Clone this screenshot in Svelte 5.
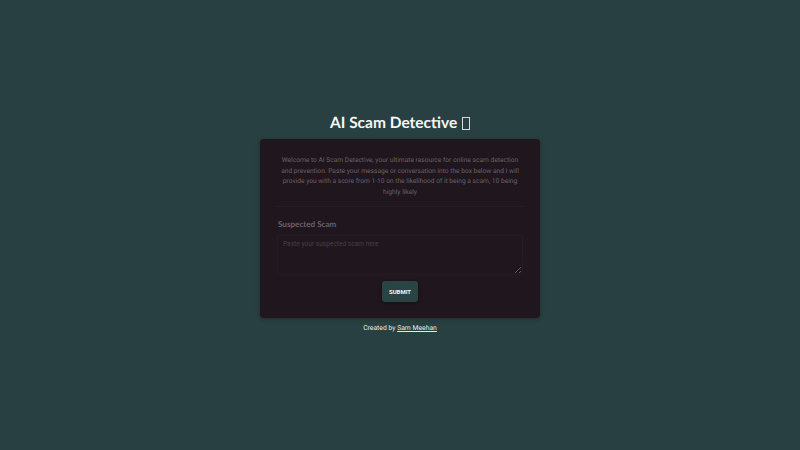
<script lang="ts">
  let scam = $state('');
</script>

<main class="page">
  <h1 class="title">AI Scam Detective <span class="tofu" aria-hidden="true"></span></h1>

  <section class="card">
    <p class="intro">
      Welcome to AI Scam Detective, your ultimate resource for online scam detection and prevention.
      Paste your message or conversation into the box below and I will provide you with a score from
      1-10 on the likelihood of it being a scam, 10 being highly likely
    </p>
    <hr class="rule" />

    <form class="form" onsubmit={(e) => e.preventDefault()}>
      <label class="label" for="scam">Suspected Scam</label>
      <textarea id="scam" class="input" placeholder="Paste your suspected scam here" bind:value={scam}></textarea>
      <button type="submit" class="submit">SUBMIT</button>
    </form>
  </section>

  <p class="credit">Created by <a href="#top">Sam Meehan</a></p>
</main>

<style>
  :global(body) {
    margin: 0;
    background: #284041;
  }

  .page {
    box-sizing: border-box;
    height: 450px;
    padding-bottom: 5px;
    display: flex;
    flex-direction: column;
    align-items: center;
    justify-content: center;
    font-family: Roboto, sans-serif;
    text-rendering: geometricPrecision;
  }

  .title {
    margin: 0 0 5px;
    font-family: Lato, sans-serif;
    font-size: 15.5px;
    line-height: 22px;
    font-weight: 700;
    color: #f4f7f6;
  }

  .tofu {
    display: inline-block;
    box-sizing: border-box;
    width: 8px;
    height: 13px;
    margin-left: 1px;
    vertical-align: -2px;
    border: 1px solid #d5dcdb;
  }

  .card {
    box-sizing: border-box;
    width: 280px;
    height: 179px;
    padding: 16px 17px;
    border-radius: 4px;
    background: #20161e;
    box-shadow: 0 1px 4px rgba(0, 0, 0, 0.3);
  }

  .intro {
    margin: 0;
    padding: 0 2px;
    font-size: 6.65px;
    line-height: 10.6px;
    text-align: center;
    color: #6a6166;
  }

  .rule {
    margin: 9px 0 0;
    border: 0;
    border-top: 1px solid #281d26;
  }

  .form {
    display: flex;
    flex-direction: column;
    align-items: center;
  }

  .label {
    align-self: flex-start;
    margin: 11px 0 0 1px;
    font-family: Lato, sans-serif;
    font-size: 8.1px;
    line-height: 12px;
    font-weight: 700;
    color: #6a6166;
  }

  .input {
    box-sizing: border-box;
    width: 100%;
    height: 40px;
    margin-top: 5px;
    padding: 4px 5px;
    border: 1px solid #2c212a;
    border-radius: 2px;
    outline: 0;
    background: transparent;
    font-family: Roboto, sans-serif;
    font-size: 6.6px;
    color: #5b525a;
    opacity: 0.5;
  }

  .input::placeholder {
    color: #6f666c;
  }

  .submit {
    width: 36px;
    height: 21px;
    margin-top: 6px;
    padding: 0;
    border: 0;
    border-radius: 3px;
    background: #2a4443;
    font-family: Roboto, sans-serif;
    font-size: 6px;
    font-weight: 700;
    color: #f4f7f6;
    box-shadow: 0 1px 3px rgba(0, 0, 0, 0.35);
  }

  .credit {
    margin: 5px 0 0;
    font-size: 6.8px;
    line-height: 10px;
    color: #e6ebea;
  }

  .credit a {
    color: inherit;
  }
</style>
